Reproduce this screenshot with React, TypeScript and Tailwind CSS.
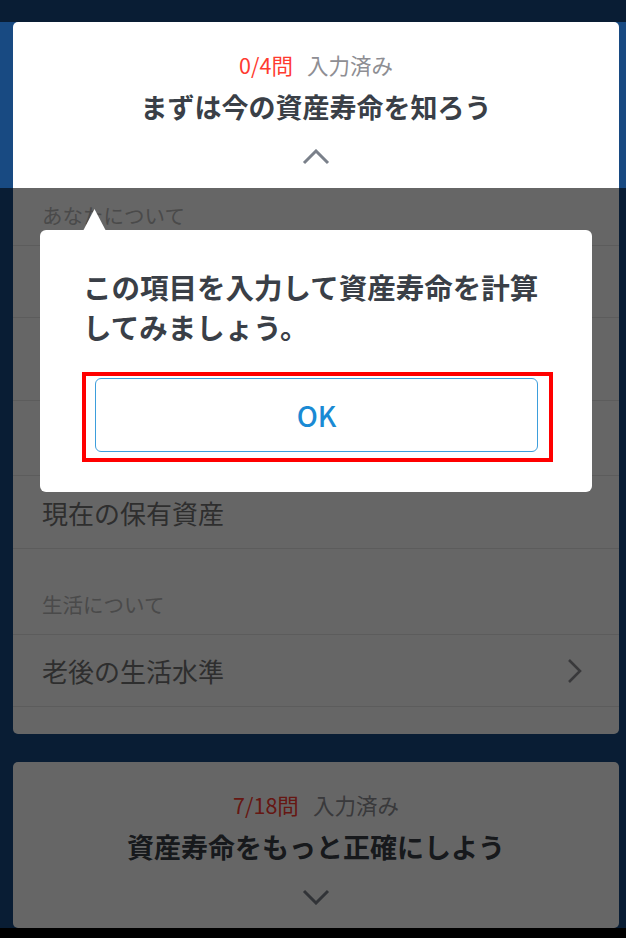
import React from "react";

const FONT = { fontFamily: '"Noto Sans CJK JP", "Noto Sans", sans-serif' };

function ChevronUp({ down = false }: { down?: boolean }) {
  return (
    <svg width="28" height="16" viewBox="0 0 28 16" fill="none">
      <path
        d={down ? "M2 2 L14 14 L26 2" : "M2 14 L14 2 L26 14"}
        stroke="#7a808a"
        strokeWidth="3"
        strokeLinecap="butt"
        strokeLinejoin="miter"
      />
    </svg>
  );
}

function ChevronRight() {
  return (
    <svg width="16" height="26" viewBox="0 0 16 26" fill="none">
      <path d="M2 2 L13 13 L2 24" stroke="#8e8e93" strokeWidth="2.6" />
    </svg>
  );
}

function StepHeader({ done, total, title, open }: { done: number; total: number; title: string; open: boolean }) {
  return (
    <div className="h-[166px] flex flex-col items-center">
      <div className="mt-[29px] flex items-baseline text-[21.5px] leading-[28px]">
        <span className="text-[#ff3b30]">{done}/{total}問</span>
        <span className="ml-[14px] text-[#8e8e93]">入力済み</span>
      </div>
      <div className="mt-[10px] text-[27px] leading-[36px] font-bold text-[#3a3f47]">{title}</div>
      <div className="mt-[24px]">
        <ChevronUp down={!open} />
      </div>
    </div>
  );
}

function SectionLabel({ label, first }: { label: string; first?: boolean }) {
  return (
    <div className={`px-[29px] pb-[18px] text-[20.5px] leading-[24px] text-[#b8b8b8] border-b border-[#e6e6e6] ${first ? "pt-[15px]" : "pt-[43px]"}`}>
      {label}
    </div>
  );
}

function Row({ label, h, arrow }: { label?: string; h: string; arrow?: boolean }) {
  return (
    <div className={`flex items-center justify-between pl-[29px] pr-[36px] border-b border-[#e6e6e6] ${h}`}>
      <span className="text-[26px] text-[#747474]">{label}</span>
      {arrow && <ChevronRight />}
    </div>
  );
}

export default function App() {
  return (
    <div className="relative w-[626px] h-[938px] overflow-hidden bg-[#184a82]" style={FONT}>
      <div className="h-[22px]" />

      {/* current step card */}
      <div className="ml-[13px] w-[606px] h-[712px] bg-white rounded-[5px]">
        <StepHeader done={0} total={4} title="まずは今の資産寿命を知ろう" open />
        <SectionLabel label="あなたについて" first />
        <Row h="h-[72px]" />
        <Row h="h-[83px]" />
        <Row h="h-[75px]" />
        <Row label="現在の保有資産" h="h-[73px]" />
        <SectionLabel label="生活について" />
        <Row label="老後の生活水準" h="h-[72px]" arrow />
      </div>

      {/* next step card */}
      <div className="mt-[28px] ml-[13px] w-[606px] h-[166px] bg-white rounded-[5px]">
        <StepHeader done={7} total={18} title="資産寿命をもっと正確にしよう" open={false} />
      </div>

      <div className="absolute left-0 right-0 bottom-0 h-[10px] bg-black" />

      {/* dim overlay, leaving the header of the first card lit */}
      <div className="absolute left-0 right-0 top-0 h-[22px] bg-black/60" />
      <div className="absolute left-0 right-0 top-[188px] bottom-0 bg-black/60" />

      {/* coach mark */}
      <svg className="absolute left-[83px] top-[209px]" width="23" height="22" viewBox="0 0 23 22">
        <path d="M11.5 0 L23 22 L0 22 Z" fill="#ffffff" />
      </svg>
      <div className="absolute left-[40px] top-[230px] w-[552px] h-[262px] bg-white rounded-[6px]">
        <p className="pt-[37px] pl-[43px] pr-[10px] text-[28.5px] leading-[40px] font-semibold text-[#3a3f47]">
          この項目を入力して資産寿命を計算
          <br />
          してみましょう。
        </p>
        <button className="mt-[31px] ml-[55px] w-[443px] h-[74px] rounded-[6px] border-[1.5px] border-[#3d9edc] bg-white text-[28px] font-medium text-[#1a8ad4]">
          OK
        </button>
      </div>
      <div className="absolute left-[82px] top-[372px] w-[471px] h-[90px] border-4 border-[#ff0000]" />
    </div>
  );
}
